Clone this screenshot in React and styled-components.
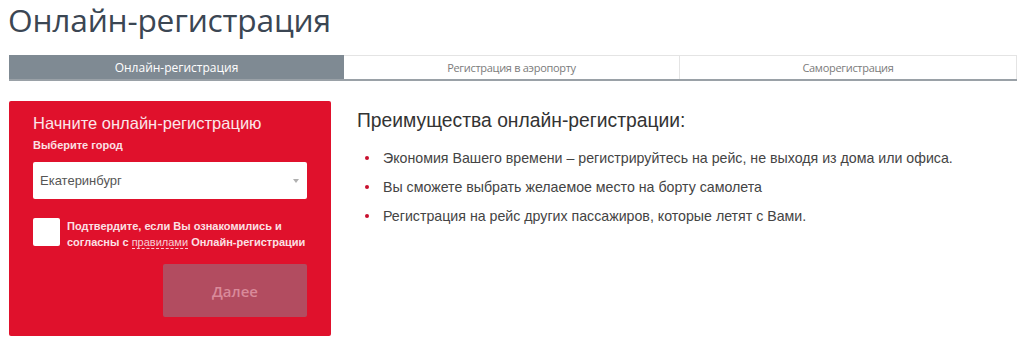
import React from "react";
import styled, { createGlobalStyle } from "styled-components";

const GlobalStyle = createGlobalStyle`
  html, body {
    margin: 0;
    padding: 0;
    background: #fff;
  }
  body {
    font-family: "Liberation Sans", Arial, sans-serif;
  }
`;

const Page = styled.div`
  width: 1024px;
  height: 339px;
  overflow: hidden;
  padding: 0 7px 0 9px;
  box-sizing: border-box;
`;

const Title = styled.h1`
  margin: -3px 0 0 -1px;
  font-family: "Open Sans", sans-serif;
  font-weight: 400;
  font-size: 31.7px;
  line-height: 46px;
  height: 46px;
  color: #3b4653;
  letter-spacing: -0.2px;
`;

const Tabs = styled.div`
  display: grid;
  grid-template-columns: 335px 336px 1fr;
  margin-top: 12px;
  height: 26px;
  border-bottom: 2px solid #9aa1a7;
  box-sizing: border-box;
`;

const Tab = styled.div`
  display: flex;
  align-items: center;
  justify-content: center;
  font-family: "Open Sans", sans-serif;
  font-size: ${({ active }) => (active ? "12px" : "11px")};
  letter-spacing: ${({ active }) => (active ? "0" : "-0.3px")};
  background: ${({ active }) => (active ? "#7f8a93" : "#fff")};
  color: ${({ active }) => (active ? "#fff" : "#7b7b7b")};
  border-top: ${({ active }) => (active ? "none" : "1px solid #e4e4e4")};
  border-right: ${({ active }) => (active ? "none" : "1px solid #e4e4e4")};
  box-sizing: border-box;
`;

const Content = styled.div`
  display: flex;
  margin-top: 20px;
`;

const Panel = styled.div`
  width: 322px;
  height: 235px;
  background: #e0112c;
  border-radius: 2px;
  box-sizing: border-box;
  padding: 12px 24px 0 24px;
  display: flex;
  flex-direction: column;
`;

const PanelTitle = styled.div`
  font-size: 16.5px;
  color: #fbe6ea;
  line-height: 20px;
`;

const FieldLabel = styled.div`
  margin-top: 5px;
  font-size: 11px;
  font-weight: 700;
  color: #fbe0e5;
  line-height: 14px;
`;

const Select = styled.div`
  margin-top: 10px;
  height: 37px;
  background: #fff;
  border-radius: 2px;
  display: flex;
  align-items: center;
  justify-content: space-between;
  padding: 0 8px 0 7px;
  font-size: 13px;
  color: #555;
`;

const Arrow = styled.span`
  width: 0;
  height: 0;
  border-left: 3px solid transparent;
  border-right: 3px solid transparent;
  border-top: 4px solid #b0b0b0;
`;

const Agree = styled.div`
  display: flex;
  gap: 7px;
  margin-top: 19px;
`;

const Checkbox = styled.div`
  width: 27px;
  height: 28px;
  flex: none;
  background: #fff;
  border-radius: 2px;
`;

const AgreeText = styled.div`
  margin-top: 0;
  font-size: 11px;
  font-weight: 700;
  line-height: 16px;
  color: #fbe0e5;
`;

const RulesLink = styled.span`
  font-weight: 400;
  color: #f7cdd5;
  border-bottom: 1px dashed #f7cdd5;
`;

const Submit = styled.div`
  align-self: flex-end;
  margin-top: 14px;
  width: 144px;
  height: 53px;
  background: #b24c60;
  border-radius: 2px;
  display: flex;
  align-items: center;
  justify-content: center;
  color: #d98a9a;
  font-family: "Open Sans", sans-serif;
  font-size: 15px;
  font-weight: 600;
`;

const Benefits = styled.div`
  margin-left: 26px;
  padding-top: 8px;
`;

const BenefitsTitle = styled.div`
  font-size: 19.3px;
  color: #333;
  line-height: 24px;
`;

const List = styled.ul`
  list-style: none;
  margin: 15px 0 0 0;
  padding: 0;
  display: flex;
  flex-direction: column;
  gap: 9px;
`;

const Item = styled.li`
  display: flex;
  align-items: center;
  font-size: 14.2px;
  line-height: 20px;
  color: #444;

  &::before {
    content: "";
    width: 4px;
    height: 4px;
    border-radius: 50%;
    background: #c8102e;
    margin: 0 14px 0 8px;
    flex: none;
  }
`;

const benefits = [
  "Экономия Вашего времени – регистрируйтесь на рейс, не выходя из дома или офиса.",
  "Вы сможете выбрать желаемое место на борту самолета",
  "Регистрация на рейс других пассажиров, которые летят с Вами.",
];

export default function App() {
  return (
    <>
      <GlobalStyle />
      <Page>
        <Title>Онлайн-регистрация</Title>
        <Tabs>
          <Tab active>Онлайн-регистрация</Tab>
          <Tab>Регистрация в аэропорту</Tab>
          <Tab>Саморегистрация</Tab>
        </Tabs>
        <Content>
          <Panel>
            <PanelTitle>Начните онлайн-регистрацию</PanelTitle>
            <FieldLabel>Выберите город</FieldLabel>
            <Select>
              <span>Екатеринбург</span>
              <Arrow />
            </Select>
            <Agree>
              <Checkbox />
              <AgreeText>
                Подтвердите, если Вы ознакомились и
                <br />
                согласны с <RulesLink>правилами</RulesLink> Онлайн-регистрации
              </AgreeText>
            </Agree>
            <Submit>Далее</Submit>
          </Panel>
          <Benefits>
            <BenefitsTitle>Преимущества онлайн-регистрации:</BenefitsTitle>
            <List>
              {benefits.map((b) => (
                <Item key={b}>{b}</Item>
              ))}
            </List>
          </Benefits>
        </Content>
      </Page>
    </>
  );
}
